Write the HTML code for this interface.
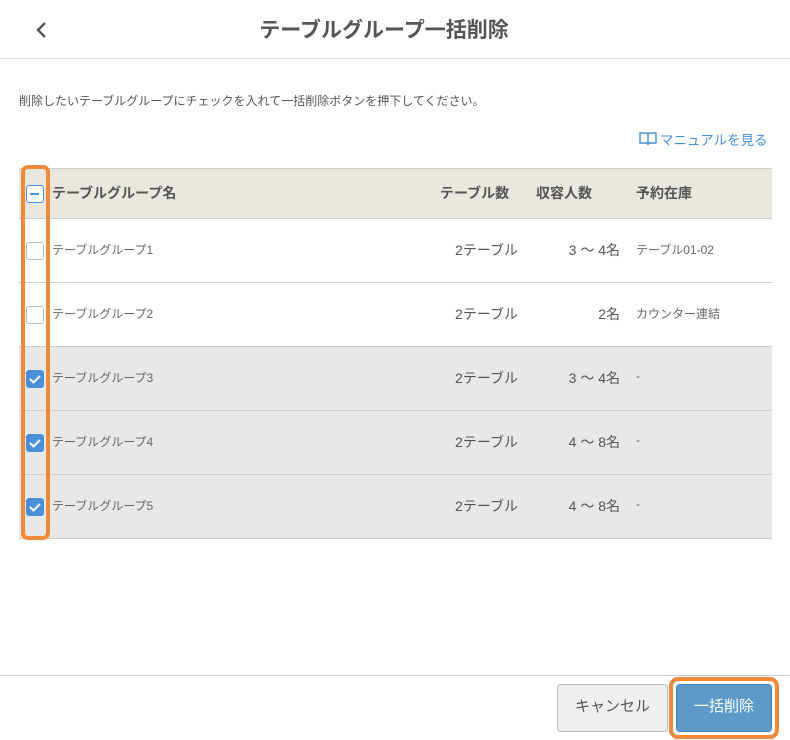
<!DOCTYPE html><html><head><meta charset="utf-8"><style>
*{box-sizing:border-box;margin:0;padding:0}
body{width:790px;height:740px;background:#fff;font-family:"Liberation Sans","Noto Sans CJK JP",sans-serif;color:#555;position:relative;overflow:hidden}
.a{position:absolute}
.title{left:0;width:768px;top:14px;text-align:center;font-size:21px;font-weight:bold;color:#555}
.row{position:absolute;left:19px;width:753px;height:64px;border-bottom:1px solid #ccc}
.cb{position:absolute;left:7px;width:18px;height:18px;border:1px solid #bbb;border-radius:3px;background:#fff}
.cb.on{background:#4a90d9;border-color:#4a90d9}
.t{position:absolute;font-size:12px;color:#666;top:22px}
.n{position:absolute;font-size:14px;color:#555;top:21px;text-align:right}
</style></head><body>
<svg class="a" style="left:33px;top:20px" width="16" height="20"><path d="M12 3L5 10L12 17" stroke="#555" stroke-width="2.4" fill="none"/></svg>
<div class="a title">テーブルグループ一括削除</div>
<div class="a" style="left:0;top:58px;width:790px;border-top:1px solid #ddd"></div>
<div class="a" style="left:19px;top:92px;font-size:12px;color:#555">削除したいテーブルグループにチェックを入れて一括削除ボタンを押下してください。</div>
<svg class="a" style="left:639px;top:131px" width="18" height="15"><path d="M1 2h6q2 0 2 2v10q0-2-2-2H1z M17 2h-6q-2 0-2 2v10q0-2 2-2h6z" stroke="#4a90d9" stroke-width="1.4" fill="none"/></svg>
<div class="a" style="left:660px;top:129px;font-size:13.5px;color:#4a90d9">マニュアルを見る</div>
<div class="a" style="left:19px;top:168px;width:753px;height:51px;background:#eae7df;border-top:1px solid #ccc;border-bottom:1px solid #ccc"></div>
<div class="a" style="left:26px;top:185px;width:18px;height:18px;border:1.5px solid #4a90d9;border-radius:3px;background:#fff"><div style="position:absolute;left:3px;top:7px;width:9px;height:2px;background:#4a90d9"></div></div>
<div class="a" style="left:52px;top:183px;font-size:14px;font-weight:bold;color:#555">テーブルグループ名</div>
<div class="a" style="left:440px;top:183px;font-size:14px;font-weight:bold;color:#555">テーブル数</div>
<div class="a" style="left:536px;top:183px;font-size:14px;font-weight:bold;color:#555">収容人数</div>
<div class="a" style="left:636px;top:183px;font-size:14px;font-weight:bold;color:#555">予約在庫</div>

<div class="row" style="top:219px"><div class="cb" style="top:23px"></div><div class="t" style="left:33px">テーブルグループ1</div><div class="n" style="right:254px">2テーブル</div><div class="n" style="right:152px">3 〜 4名</div><div class="t" style="left:617px">テーブル01-02</div></div>
<div class="row" style="top:283px"><div class="cb" style="top:23px"></div><div class="t" style="left:33px">テーブルグループ2</div><div class="n" style="right:254px">2テーブル</div><div class="n" style="right:152px">2名</div><div class="t" style="left:617px">カウンター連結</div></div>
<div class="row" style="top:347px;background:#e8e8e8"><div class="cb on" style="top:23px"><svg width="16" height="16"><path d="M3 8l3.5 3.5L13 5" stroke="#fff" stroke-width="2" fill="none"/></svg></div><div class="t" style="left:33px">テーブルグループ3</div><div class="n" style="right:254px">2テーブル</div><div class="n" style="right:152px">3 〜 4名</div><div class="t" style="left:617px">-</div></div>
<div class="row" style="top:411px;background:#e8e8e8"><div class="cb on" style="top:23px"><svg width="16" height="16"><path d="M3 8l3.5 3.5L13 5" stroke="#fff" stroke-width="2" fill="none"/></svg></div><div class="t" style="left:33px">テーブルグループ4</div><div class="n" style="right:254px">2テーブル</div><div class="n" style="right:152px">4 〜 8名</div><div class="t" style="left:617px">-</div></div>
<div class="row" style="top:475px;background:#e8e8e8"><div class="cb on" style="top:23px"><svg width="16" height="16"><path d="M3 8l3.5 3.5L13 5" stroke="#fff" stroke-width="2" fill="none"/></svg></div><div class="t" style="left:33px">テーブルグループ5</div><div class="n" style="right:254px">2テーブル</div><div class="n" style="right:152px">4 〜 8名</div><div class="t" style="left:617px">-</div></div>

<div class="a" style="left:21px;top:165px;width:29px;height:375px;border:4px solid #f08a3a;border-radius:7px"></div>

<div class="a" style="left:0;top:675px;width:790px;border-top:1px solid #ccc"></div>
<div class="a" style="left:557px;top:684px;width:111px;height:48px;background:#efefef;border:1px solid #bbb;border-radius:4px;font-size:15px;color:#555;text-align:center;line-height:44px">キャンセル</div>
<div class="a" style="left:669px;top:677px;width:110px;height:62px;border:4px solid #f08a3a;border-radius:9px"></div>
<div class="a" style="left:676px;top:684px;width:96px;height:48px;background:#5d9ac7;border:1px solid #4a7fa8;border-radius:4px;font-size:15px;color:#fff;text-align:center;line-height:44px">一括削除</div>
</body></html>
